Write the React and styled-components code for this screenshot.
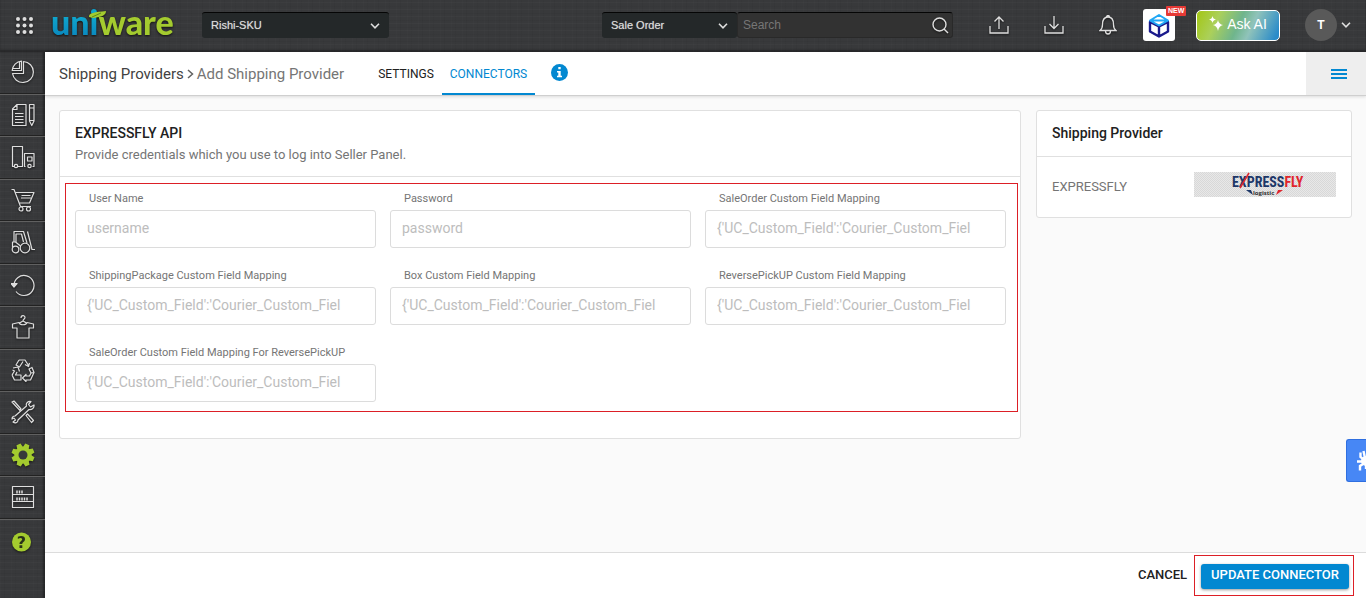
import React from "react";
import styled, { createGlobalStyle, css } from "styled-components";

const GlobalStyle = createGlobalStyle`
  * {
    box-sizing: border-box;
  }
  body {
    margin: 0;
    background-color: #fafafa;
    color: #212121;
    font-family: Roboto, "Liberation Sans", sans-serif;
    font-size: 14px;
  }
  button,
  input,
  select {
    font-family: inherit;
  }
  svg {
    display: block;
  }
`;

const linen = css`
  background-color: #38393b;
  background-image: repeating-linear-gradient(
      0deg,
      rgba(255, 255, 255, 0.02) 0 1px,
      transparent 1px 3px,
      rgba(0, 0, 0, 0.03) 3px 4px,
      transparent 4px 7px
    ),
    repeating-linear-gradient(
      90deg,
      rgba(255, 255, 255, 0.01) 0 1px,
      transparent 1px 4px,
      rgba(0, 0, 0, 0.03) 4px 5px,
      transparent 5px 11px
    );
`;

const Page = styled.div`
  display: flex;
  flex-direction: column;
  min-height: 100vh;
`;

const Header = styled.header`
  ${linen};
  display: flex;
  align-items: center;
  height: 52px;
  padding: 0 15px 2px 16px;
  box-shadow: inset 0 -2px 2px rgba(0, 0, 0, 0.35);
  font-family: "Liberation Sans", Arial, sans-serif;
`;

const IconButton = styled.button`
  display: flex;
  padding: 0;
  border: 0;
  background: none;
  color: #dedede;
  cursor: pointer;
  filter: drop-shadow(0 1px 1px rgba(0, 0, 0, 0.6));
`;

const Brand = styled.a`
  margin: 0 24px 0 18px;
`;

const SelectBox = styled.div`
  position: relative;
  width: ${(props) => props.$width};
  color: #dedede;
`;

const Select = styled.select`
  appearance: none;
  display: block;
  width: 100%;
  height: 26px;
  padding: 0 24px 2px 9px;
  border: 0;
  border-top: 1px solid #050505;
  border-radius: 3px;
  background-color: #242829;
  color: #dedede;
  font-size: 11px;
  text-shadow: 0 0 1px rgba(222, 222, 222, 0.6);
`;

const SelectArrow = styled.span`
  position: absolute;
  top: 11px;
  right: 9px;
  pointer-events: none;
`;

const SearchGroup = styled.form`
  display: flex;
  width: 351px;
  margin-left: auto;
`;

const SearchBox = styled.div`
  display: flex;
  flex: 1;
  align-items: center;
  height: 26px;
  padding-right: 3px;
  border: 1px solid #292929;
  border-top-color: #050505;
  border-radius: 3px;
  background-color: #323232;
`;

const SearchInput = styled.input`
  flex: 1;
  min-width: 0;
  padding: 0 5px;
  border: 0;
  outline: 0;
  background: none;
  color: #dedede;
  font-size: 12px;
  &::placeholder {
    color: #767676;
  }
`;

const Actions = styled.div`
  display: flex;
  align-items: center;
  gap: 35px;
  margin-left: 36px;
`;

const AppButton = styled.button`
  position: relative;
  display: flex;
  align-items: center;
  justify-content: center;
  width: 32px;
  height: 32px;
  margin: 0 -14px 0 -9px;
  padding: 0;
  border: 0;
  border-radius: 3px;
  background-color: white;
`;

const NewBadge = styled.span`
  position: absolute;
  top: -3px;
  left: 23px;
  padding: 0 2px;
  border-radius: 1px;
  background-color: #e53935;
  color: white;
  font-size: 7px;
  font-weight: bold;
  line-height: 10px;
`;

const AskButton = styled.button`
  display: flex;
  align-items: center;
  justify-content: center;
  gap: 4px;
  width: 84px;
  height: 31px;
  margin-right: -10px;
  padding: 0 0 3px;
  border: 1px solid white;
  border-radius: 5px;
  background: linear-gradient(
    115deg,
    #a3c614 0%,
    #abd05a 25%,
    #6fb58c 50%,
    #90c3ba 65%,
    #2a8bc9 95%
  );
  color: white;
  font-size: 14px;
`;

const UserMenu = styled.button`
  display: flex;
  align-items: center;
  gap: 4px;
  padding: 0;
  border: 0;
  background: none;
  color: #dedede;
`;

const Avatar = styled.span`
  width: 32px;
  border-radius: 50%;
  background-color: #595959;
  color: white;
  font-size: 12px;
  font-weight: bold;
  line-height: 32px;
`;

const Body = styled.div`
  display: flex;
  flex: 1;
`;

const Sidebar = styled.nav`
  ${linen};
  width: 45px;
  flex-shrink: 0;
  box-shadow: inset -2px 0 2px rgba(0, 0, 0, 0.35);
`;

const SideItem = styled.a`
  display: flex;
  align-items: center;
  justify-content: center;
  height: 43px;
  padding-bottom: 2px;
  border-bottom: 1px solid #606060;
  box-shadow: inset 0 -1px 0 #222;
  color: ${(props) => (props.$active ? "#a4cb2f" : "#dedede")};
  &:nth-child(even) {
    height: 42px;
  }
  &:last-child {
    height: 43px;
    padding-bottom: 0;
    border-bottom: 0;
    box-shadow: none;
  }
  svg {
    filter: drop-shadow(0 1px 1px rgba(0, 0, 0, 0.6));
  }
`;

const Main = styled.main`
  display: flex;
  flex: 1;
  flex-direction: column;
  min-width: 0;
`;

const TitleBar = styled.div`
  display: flex;
  align-items: stretch;
  height: 44px;
  padding-left: 14px;
  border-bottom: 1px solid #cfcfcf;
  background-color: white;
  box-shadow: 0 1px 3px rgba(0, 0, 0, 0.12);
`;

const Breadcrumb = styled.div`
  display: flex;
  align-items: center;
  gap: 3px;
  margin-right: 26px;
  color: #757575;
  font-size: 15px;
`;

const CrumbLink = styled.a`
  color: #424242;
  text-decoration: none;
`;

const Tab = styled.a`
  display: flex;
  align-items: center;
  padding: 2px 8px 0;
  border-bottom: 2px solid ${(props) => (props.$active ? "#0288d1" : "transparent")};
  color: ${(props) => (props.$active ? "#0288d1" : "#212121")};
  font-size: 12px;
  text-decoration: none;
`;

const InfoButton = styled.button`
  display: flex;
  align-items: center;
  margin-left: 16px;
  padding: 0 0 2px;
  border: 0;
  background: none;
`;

const MenuButton = styled.button`
  display: flex;
  align-items: center;
  justify-content: center;
  width: 60px;
  margin-left: auto;
  padding: 0 0 0 6px;
  border: 0;
  background-color: #eeeeee;
  color: #0288d1;
`;

const Content = styled.div`
  display: grid;
  flex: 1;
  grid-template-columns: 1fr 316px;
  align-items: start;
  gap: 15px;
  padding: 14px;
`;

const Card = styled.section`
  border: 1px solid #e0e0e0;
  border-radius: 3px;
  background-color: white;
`;

const CardHeader = styled.div`
  padding: 13px 14px 14px 15px;
  border-bottom: 1px solid #e0e0e0;
`;

const CardTitle = styled.h2`
  margin: 0;
  font-size: 14px;
  font-weight: 500;
  line-height: 18px;
`;

const CardText = styled.p`
  margin: 4px 0 -2px;
  color: #757575;
  font-size: 13px;
  line-height: 18px;
`;

const FieldGrid = styled.div`
  display: grid;
  grid-template-columns: repeat(3, 1fr);
  gap: 20px 14px;
  margin: 6px 2px 26px 5px;
  padding: 7px 11px 9px 9px;
  border: 1px solid #dc1f26;
`;

const Field = styled.div`
  display: flex;
  flex-direction: column;
  gap: 4px;
  min-width: 0;
`;

const Label = styled.label`
  padding-left: 14px;
  color: #757575;
  font-size: 11px;
  line-height: 15px;
`;

const TextInput = styled.input`
  width: 100%;
  height: 38px;
  padding: 0 11px 2px;
  border: 1px solid #dcdcdc;
  border-radius: 3px;
  background-color: white;
  font-size: 14px;
  &::placeholder {
    color: #bdbdbd;
  }
`;

const ProviderRow = styled.div`
  display: flex;
  align-items: flex-end;
  justify-content: space-between;
  padding: 15px 15px 20px;
  color: #757575;
  font-size: 13px;
  line-height: 20px;
`;

const Footer = styled.footer`
  display: flex;
  align-items: center;
  justify-content: flex-end;
  gap: 7px;
  height: 46px;
  padding-right: 12px;
  border-top: 1px solid #dcdcdc;
  background-color: white;
`;

const CancelButton = styled.button`
  padding: 0 0 2px;
  border: 0;
  background: none;
  color: #212121;
  font-size: 13px;
  font-weight: 500;
`;

const Highlight = styled.div`
  padding: 8px 4px 6px 6px;
  border: 1px solid #dc1f26;
`;

const UpdateButton = styled.button`
  display: block;
  height: 25px;
  padding: 0 10px 4px;
  border: 0;
  border-radius: 3px;
  background-color: #0288d1;
  box-shadow: 0 1px 3px rgba(0, 0, 0, 0.4);
  color: white;
  font-size: 13px;
  font-weight: 500;
`;

const SideTab = styled.button`
  position: fixed;
  top: 439px;
  right: 0;
  display: flex;
  align-items: center;
  justify-content: flex-end;
  width: 20px;
  height: 43px;
  padding: 0;
  border: 1px solid #2f6fe0;
  border-right: 0;
  border-radius: 3px 0 0 3px;
  background-color: #4787f5;
`;

const Chevron = () => (
  <svg width="10" height="6" viewBox="0 0 10 6" fill="none" stroke="currentColor" strokeWidth="1.6">
    <path d="M1 .8 5 4.8 9 .8" />
  </svg>
);

const Line = ({ children }) => (
  <svg
    width="24"
    height="24"
    viewBox="0 0 24 24"
    fill="none"
    stroke="currentColor"
    strokeWidth="1.2"
    strokeLinejoin="round"
  >
    {children}
  </svg>
);

const Logo = () => (
  <svg width="127" height="50" viewBox="0 0 127 50" role="img" aria-label="uniware">
    <defs>
      <linearGradient id="uni" x1="0" y1="0" x2="0" y2="1">
        <stop offset="0.4" stopColor="#0fa4cc" />
        <stop offset="0.9" stopColor="#0a86bd" />
      </linearGradient>
    </defs>
    <g style={{ filter: "drop-shadow(0 1px 1px #111)" }}>
      <text x="0" y="35" fontFamily="Lato" fontSize="34" fontWeight="900">
        <tspan fill="url(#uni)">uni</tspan>
        <tspan fill="#a4cb2f">ware</tspan>
      </text>
      <path d="M38 17C37 13 44 12 55 11 55 15 51 17 42 18Z" fill="#a4cb2f" />
    </g>
    <path d="M41 17 50 13" stroke="#5e8c1a" />
  </svg>
);

const ExpressflyLogo = () => (
  <svg width="142" height="25" viewBox="0 0 142 25" role="img" aria-label="Expressfly logistic">
    <defs>
      <pattern id="checks" width="2" height="2" patternUnits="userSpaceOnUse">
        <rect width="2" height="2" fill="#e8e8e8" />
        <rect width="1" height="1" fill="#d8d8d8" />
        <rect x="1" y="1" width="1" height="1" fill="#d8d8d8" />
      </pattern>
    </defs>
    <rect width="142" height="25" fill="url(#checks)" />
    <text
      x="38"
      y="15"
      fontFamily="'Roboto Condensed', Roboto"
      fontSize="14"
      fontWeight="bold"
    >
      <tspan fill="#1d3768">EXPRESS</tspan>
      <tspan fill="#e0252d">FLY</tspan>
    </text>
    <path d="m46 16 9-15" stroke="#e0252d" strokeWidth="1.5" />
    <path d="M52 18h5l2 5Z" fill="#1d3768" />
    <path d="M89 18h-5l-2 5Z" fill="#e0252d" />
    <text x="59" y="23" fontFamily="Open Sans" fontSize="6" fontWeight="bold" fill="#333">
      logistic
    </text>
  </svg>
);

const sideItems = [
  {
    name: "Dashboard",
    icon: (
      <>
        <path d="M12.500 1.500a10.500 10.500 0 1 1-11 12h11z" />
        <path d="M10.500 1.200v9.300H1.200A10 10 0 0 1 10.500 1.200zM8.500 2v6.500H2" />
      </>
    ),
  },
  {
    name: "Orders",
    icon: (
      <>
        <path d="M6 1.500h9v21H1.500V6zM6 2v4.500H2M4 10.500h8.500M4 13.500h8.500M4 16.500h8.500M4 19.500h8.500" />
        <path d="M18.500 1.500H23V18l-2.200 4.500-2.300-4.500zM18.500 5H23M18.500 17.500H23" />
      </>
    ),
  },
  {
    name: "Shipments",
    icon: (
      <>
        <path d="M3 21.500H1.500v-20h10v20H7M14.500 21.500h-1V8.500H23v13h-1.500" />
        <path d="M16.500 12H21v4h-4.500z" />
        <circle cx="5" cy="21" r="1.700" />
        <circle cx="18.500" cy="21" r="1.700" />
      </>
    ),
  },
  {
    name: "Purchase",
    icon: (
      <>
        <path d="M.5 1.500h2.500L9.500 18.500H20M4.500 4.500H23L18.500 15H8.500M10 10h10M10.500 7.500h9" />
        <circle cx="10" cy="21" r="2" />
        <circle cx="17.500" cy="21" r="2" />
      </>
    ),
  },
  {
    name: "Inbound",
    icon: (
      <>
        <circle cx="4.500" cy="19.500" r="3.300" />
        <circle cx="14" cy="18" r="4.800" />
        <path d="M1.500 17v-5h3l5 4M3 12V1.500h9.500L16 13M5 12V4h5.500l2 8M16.500 1.500 21 19.500h3" />
      </>
    ),
  },
  {
    name: "Returns",
    icon: (
      <>
        <path d="M3 13A10 10 0 1 1 5 18.500" />
        <path d="m0 10.500 3 3.500 3-3.500z" fill="currentColor" />
      </>
    ),
  },
  {
    name: "Products",
    icon: (
      <>
        <path d="M10 3c0-3 4-3 4-.5 0 1.500-2 1.500-2 3.500M12 6l-3.500 2M12 6l3.500 2" />
        <path d="M8 7.500 1.500 9v4H6v10h12V13h4.500V9L16 7.500c-1 3-7 3-8 0z" />
      </>
    ),
  },
  {
    name: "Inventory",
    icon: (
      <>
        <path d="M8 2h6l3.500 5.500M8 2 5 7l3.500 2L12 3.500M14 6.500l3.500 2 1-3.500" />
        <path d="m2 10 5-1 1.500 4.500M1 17l2.500-4-2-1M1 17l2.500 5H10v-5H4.500l1.500-3M1 17l1-1" />
        <path d="m18 11 3-1.500 2 5L19.500 22H15v1.500L11.500 20l3.500-3.500V18h3.500l1.500-3zM20 15l3-.5" />
      </>
    ),
  },
  {
    name: "Tools",
    icon: (
      <>
        <path d="m4 16 11.500-10c-1-3 1.500-5 4.500-4.500L17.500 4.500l2 2.500L23 5c.5 3-2 5-5 4.500L7 20c0 3-3 3.500-5 2l2.500-2L3 18l-2 1c0-2 1-3 3-3z" />
        <path d="m1 2 2-1 7 8-1 1.500zM15 15.500l1.500-1.500 6 6.500-2 2z" />
      </>
    ),
  },
  {
    name: "Settings",
    active: true,
    icon: (
      <>
        {[0, 45, 90, 135].map((angle) => (
          <path
            key={angle}
            d="M9.800.5h4.400l.8 4v15l-.8 4H9.800l-.8-4v-15z"
            fill="currentColor"
            stroke="none"
            transform={`rotate(${angle + 22} 12 12)`}
          />
        ))}
        <circle cx="12" cy="12" r="8" fill="currentColor" />
        <circle cx="12" cy="12" r="4.500" fill="#37383a" stroke="none" />
      </>
    ),
  },
  {
    name: "Reports",
    icon: (
      <>
        <path d="M1.500 1.500h21v21h-21zM2 9.500h20M2 16.500h20" />
        <path
          d="M6 5.500v3M8.500 5.500v3M11 5.500v3M6 12.500v3M8.500 12.500v3M11 12.500v3M13.500 12.500v3M16 12.500v3"
          strokeWidth="1.500"
        />
      </>
    ),
  },
  {
    name: "Help",
    active: true,
    icon: (
      <>
        <circle cx="10.500" cy="12" r="9.500" fill="currentColor" stroke="none" />
        <text
          x="10.500"
          y="18"
          fill="#29321a"
          stroke="none"
          fontFamily="DejaVu Sans"
          fontSize="16"
          fontWeight="bold"
          textAnchor="middle"
        >
          ?
        </text>
      </>
    ),
  },
];

const mapping = "{'UC_Custom_Field':'Courier_Custom_Fiel";

const fields = [
  { id: "username", label: "User Name", placeholder: "username" },
  { id: "password", label: "Password", placeholder: "password" },
  { id: "saleOrder", label: "SaleOrder Custom Field Mapping", placeholder: mapping },
  { id: "package", label: "ShippingPackage Custom Field Mapping", placeholder: mapping },
  { id: "box", label: "Box Custom Field Mapping", placeholder: mapping },
  { id: "reverse", label: "ReversePickUP Custom Field Mapping", placeholder: mapping },
  {
    id: "saleReverse",
    label: "SaleOrder Custom Field Mapping For ReversePickUP",
    placeholder: mapping,
  },
];

const TopBar = () => (
  <Header>
    <IconButton aria-label="Apps">
      <svg width="17" height="17" viewBox="0 0 17 17" fill="currentColor">
        {[2, 8.5, 15].map((y) => [2, 8.5, 15].map((x) => <circle key={`${x}${y}`} cx={x} cy={y} r="2" />))}
      </svg>
    </IconButton>
    <Brand href="#home">
      <Logo />
    </Brand>
    <SelectBox $width="187px">
      <Select aria-label="Facility">
        <option>Rishi-SKU</option>
      </Select>
      <SelectArrow>
        <Chevron />
      </SelectArrow>
    </SelectBox>
    <SearchGroup>
      <SelectBox $width="135px">
        <Select aria-label="Search type">
          <option>Sale Order</option>
        </Select>
        <SelectArrow>
          <Chevron />
        </SelectArrow>
      </SelectBox>
      <SearchBox>
        <SearchInput placeholder="Search" aria-label="Search" />
        <IconButton type="button" aria-label="Run search">
          <svg width="17" height="17" viewBox="0 0 17 17" fill="none" stroke="currentColor" strokeWidth="1.4">
            <circle cx="7.500" cy="7.500" r="6.500" />
            <path d="m12 12 4 4" />
          </svg>
        </IconButton>
      </SearchBox>
    </SearchGroup>
    <Actions>
      <IconButton aria-label="Upload">
        <svg width="20" height="18" viewBox="0 0 20 18" fill="none" stroke="currentColor" strokeWidth="1.300">
          <path d="M1 10v7h18v-7M10 13V1M5.500 5.500 10 1l4.500 4.500" />
        </svg>
      </IconButton>
      <IconButton aria-label="Download">
        <svg width="20" height="18" viewBox="0 0 20 18" fill="none" stroke="currentColor" strokeWidth="1.300">
          <path d="M1 10v7h18v-7M10 0v12.500M5.500 8 10 12.500 14.500 8" />
        </svg>
      </IconButton>
      <IconButton aria-label="Notifications">
        <svg width="18" height="20" viewBox="0 0 18 20" fill="none" stroke="currentColor" strokeWidth="1.300">
          <path d="M1 15.500c2-1.500 2.500-3 2.500-6C3.500 5 5.500 2 9 2s5.500 3 5.500 7.500c0 3 .5 4.500 2.500 6zM7.500 2C7.500 0 10.500 0 10.500 2M6.500 16c0 4 5 4 5 0" />
        </svg>
      </IconButton>
      <AppButton aria-label="Products">
        <svg width="22" height="25" viewBox="0 0 22 25" fill="none" strokeWidth="2.400" strokeLinejoin="round">
          <path d="M2 9v9.500l9 5 9-5V9l-9 4.500zM11 14v9" stroke="#1a1a8c" />
          <path d="M2 7.500 11 2l9 5.500-9 5zM2 7.500h18" stroke="#1fa7f5" strokeWidth="2" />
        </svg>
        <NewBadge>NEW</NewBadge>
      </AppButton>
      <AskButton>
        <svg width="14" height="16" viewBox="0 0 14 16" fill="white">
          <path d="M9 4q.8 4.200 5 5-4.200.8-5 6-.8-5.200-5-6 4.200-.8 5-5zM3.500 0q.5 3 3.500 3.500-3 .5-3.500 3.500Q3 4 0 3.500 3 3 3.500 0z" />
        </svg>
        Ask AI
      </AskButton>
      <UserMenu aria-label="User menu">
        <Avatar>T</Avatar>
        <Chevron />
      </UserMenu>
    </Actions>
  </Header>
);

const ConnectorForm = () => (
  <Card>
    <CardHeader>
      <CardTitle>EXPRESSFLY API</CardTitle>
      <CardText>Provide credentials which you use to log into Seller Panel.</CardText>
    </CardHeader>
    <FieldGrid>
      {fields.map((field) => (
        <Field key={field.id}>
          <Label htmlFor={field.id}>{field.label}</Label>
          <TextInput id={field.id} placeholder={field.placeholder} />
        </Field>
      ))}
    </FieldGrid>
  </Card>
);

const App = () => {
  return (
    <>
      <GlobalStyle />
      <Page>
        <TopBar />
        <Body>
          <Sidebar>
            {sideItems.map((item) => (
              <SideItem key={item.name} href="#menu" aria-label={item.name} $active={item.active}>
                <Line>{item.icon}</Line>
              </SideItem>
            ))}
          </Sidebar>
          <Main>
            <TitleBar>
              <Breadcrumb>
                <CrumbLink href="#providers">Shipping Providers</CrumbLink>
                <svg width="7" height="10" viewBox="0 0 7 10" fill="none" stroke="#616161" strokeWidth="1.500">
                  <path d="m1 1 4.500 4L1 9" />
                </svg>
                <span>Add Shipping Provider</span>
              </Breadcrumb>
              <Tab href="#settings">SETTINGS</Tab>
              <Tab href="#connectors" $active>
                CONNECTORS
              </Tab>
              <InfoButton aria-label="Info">
                <svg width="17" height="17" viewBox="0 0 17 17">
                  <circle cx="8.500" cy="8.500" r="8.500" fill="#0288d1" />
                  <path d="M7.300 3h2.400v2.200H7.300zM6 7h3.700v4.800H11v1.400H6v-1.400h1.300V8.400H6z" fill="white" />
                </svg>
              </InfoButton>
              <MenuButton aria-label="Menu">
                <svg width="16" height="10" viewBox="0 0 16 10" stroke="currentColor" strokeWidth="2">
                  <path d="M0 1h16M0 5h16M0 9h16" />
                </svg>
              </MenuButton>
            </TitleBar>
            <Content>
              <ConnectorForm />
              <Card>
                <CardHeader>
                  <CardTitle>Shipping Provider</CardTitle>
                </CardHeader>
                <ProviderRow>
                  <span>EXPRESSFLY</span>
                  <ExpressflyLogo />
                </ProviderRow>
              </Card>
            </Content>
            <Footer>
              <CancelButton>CANCEL</CancelButton>
              <Highlight>
                <UpdateButton>UPDATE CONNECTOR</UpdateButton>
              </Highlight>
            </Footer>
          </Main>
        </Body>
      </Page>
      <SideTab aria-label="Support">
        <svg width="9" height="22" viewBox="0 0 9 22" fill="none" stroke="white" strokeWidth="2.400">
          <path d="M8 8 6.500 1M6 9 3.500 7V2.500M6 11.500H0M6 14l-3 2v4.500" />
          <circle cx="9" cy="11" r="5" fill="white" stroke="none" />
          <path d="M9 15v4" />
        </svg>
      </SideTab>
    </>
  );
};

export default App;
